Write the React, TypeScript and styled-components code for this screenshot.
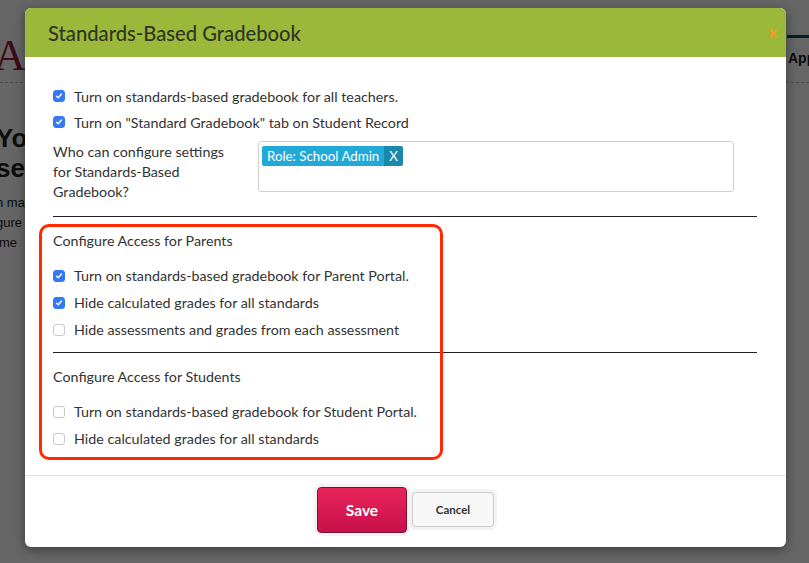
import React from "react";
import styled, { createGlobalStyle } from "styled-components";

const GlobalStyle = createGlobalStyle`
  html, body {
    margin: 0;
    padding: 0;
    width: 809px;
    height: 563px;
    overflow: hidden;
    font-family: "Lato", "Open Sans", sans-serif;
  }
`;

const Page = styled.div`
  position: relative;
  width: 809px;
  height: 563px;
  background: #ffffff;
  overflow: hidden;
`;

const PageHeader = styled.div`
  display: flex;
  align-items: flex-start;
  justify-content: space-between;
  height: 82px;
  border-bottom: 1px dashed #bbbbbb;
`;

const Logo = styled.div`
  font-family: "Liberation Serif", serif;
  font-size: 44px;
  color: #9b1c3d;
  margin: 34px 0 0 -6px;
  line-height: 1;
`;

const NavSide = styled.div`
  width: 21px;
  margin-top: 35px;
  border-top: 3px solid #0f4c5c;
  font-family: "Liberation Sans", sans-serif;
  font-weight: bold;
  font-size: 14px;
  color: #222;
  padding-top: 12px;
  padding-left: 1px;
  white-space: nowrap;
`;

const Intro = styled.div`
  padding: 40px 0 0 0;
  margin-left: -4px;
  font-family: "Liberation Sans", sans-serif;
  color: #222;
`;

const Big = styled.div`
  font-size: 26px;
  font-weight: bold;
  line-height: 30px;
`;

const Small = styled.div`
  font-size: 13px;
  line-height: 20px;
  margin-top: 10px;
`;

const Dim = styled.div`
  position: absolute;
  inset: 0;
  background: rgba(0, 0, 0, 0.6);
`;

const Modal = styled.div`
  position: absolute;
  left: 25px;
  top: 8px;
  width: 761px;
  height: 539px;
  background: #ffffff;
  border-radius: 6px;
  overflow: hidden;
  box-shadow: 0 3px 12px rgba(0, 0, 0, 0.4);
  display: flex;
  flex-direction: column;
  color: #333;
  font-family: "Lato", "Open Sans", sans-serif;
`;

const ModalHeader = styled.div`
  height: 49px;
  background: #9bb83a;
  display: flex;
  align-items: center;
  justify-content: space-between;
  padding: 0 9px 0 23px;
  flex-shrink: 0;
`;

const Title = styled.h2`
  margin: 0;
  font-size: 20.2px;
  font-weight: 500;
  color: #2f3524;
`;

const Close = styled.span`
  color: #f39a1c;
  font-size: 16px;
  font-weight: 900;
  margin-top: -3px;
`;

const Body = styled.div`
  position: relative;
  padding: 26px 29px 0 28px;
  flex: 1;
`;

const Row = styled.label<{ $h: number }>`
  display: flex;
  align-items: center;
  height: ${(p) => p.$h}px;
  font-size: 14.3px;
  color: #333;
  white-space: nowrap;
`;

const Box = styled.span<{ $on?: boolean }>`
  width: 12px;
  height: 12px;
  flex-shrink: 0;
  border-radius: 3px;
  box-sizing: border-box;
  margin-right: 9px;
  display: inline-flex;
  align-items: center;
  justify-content: center;
  background: ${(p) => (p.$on ? "#3478f6" : "#ffffff")};
  border: 1px solid ${(p) => (p.$on ? "#3478f6" : "#c8c8c8")};
`;

const ConfigRow = styled.div`
  display: flex;
  margin-top: 6px;
`;

const ConfigLabel = styled.div`
  width: 205px;
  font-size: 14.3px;
  line-height: 20px;
  margin-top: 1px;
`;

const TagInput = styled.div`
  width: 476px;
  height: 51px;
  box-sizing: border-box;
  border: 1px solid #cfcfcf;
  border-radius: 3px;
  padding: 3px;
`;

const Tag = styled.span`
  display: inline-flex;
  height: 20px;
  border-radius: 2px;
  overflow: hidden;
  font-size: 13.3px;
  color: #ffffff;
`;

const TagText = styled.span`
  background: #21a9d8;
  padding: 0 5px;
  line-height: 20px;
`;

const TagX = styled.span`
  background: #1888ad;
  padding: 0 5px;
  line-height: 20px;
`;

const Divider = styled.hr`
  border: none;
  border-top: 1px solid #222;
  margin: 0;
`;

const SectionTitle = styled.div`
  font-size: 14.3px;
  height: 20px;
  line-height: 20px;
`;

const Group = styled.div<{ $top: number }>`
  margin-top: ${(p) => p.$top}px;
`;

const Highlight = styled.div`
  position: absolute;
  left: 14px;
  top: 167px;
  width: 398px;
  height: 230px;
  border: 3px solid #ff2a00;
  border-radius: 10px;
  pointer-events: none;
`;

const Footer = styled.div`
  height: 72px;
  border-top: 1px solid #e2e2e2;
  display: flex;
  justify-content: center;
  align-items: flex-start;
  gap: 5px;
  padding-top: 11px;
  box-sizing: border-box;
  flex-shrink: 0;
`;

const SaveButton = styled.button`
  width: 90px;
  height: 46px;
  border-radius: 4px;
  border: 1px solid #7a1030;
  background: linear-gradient(#e8245c, #c8104a);
  color: #fff;
  font-family: "Lato", sans-serif;
  font-size: 15.5px;
  font-weight: bold;
  box-shadow: 0 0 0 3px #f3f3f3;
`;

const CancelButton = styled.button`
  width: 82px;
  height: 35px;
  margin-top: 5px;
  border-radius: 4px;
  border: 1px solid #cccccc;
  background: #f7f7f7;
  color: #333;
  font-family: "Lato", sans-serif;
  font-size: 11.5px;
  font-weight: bold;
  box-shadow: 0 0 0 3px #f3f3f3;
`;

const Check = () => (
  <svg width="8" height="8" viewBox="0 0 8 8">
    <path d="M1.5 4.2 L3.2 5.8 L6.5 2" fill="none" stroke="#fff" strokeWidth="1.4" strokeLinecap="round" strokeLinejoin="round" />
  </svg>
);

const Option = ({ on, h = 27, children }: { on?: boolean; h?: number; children: React.ReactNode }) => (
  <Row $h={h}>
    <Box $on={on}>{on && <Check />}</Box>
    {children}
  </Row>
);

export default function App() {
  return (
    <>
      <GlobalStyle />
      <Page>
        <PageHeader>
          <Logo>A</Logo>
          <NavSide>App</NavSide>
        </PageHeader>
        <Intro>
          <Big>You</Big>
          <Big>se</Big>
          <Small>
            n ma
            <br />
            gure
            <br />
            ime
          </Small>
        </Intro>
        <Dim />
        <Modal>
          <ModalHeader>
            <Title>Standards-Based Gradebook</Title>
            <Close>x</Close>
          </ModalHeader>
          <Body>
            <Option on h={26}>Turn on standards-based gradebook for all teachers.</Option>
            <Option on h={26}>Turn on "Standard Gradebook" tab on Student Record</Option>
            <ConfigRow>
              <ConfigLabel>
                Who can configure settings
                <br />
                for Standards-Based
                <br />
                Gradebook?
              </ConfigLabel>
              <TagInput>
                <Tag>
                  <TagText>Role: School Admin</TagText>
                  <TagX>X</TagX>
                </Tag>
              </TagInput>
            </ConfigRow>
            <Group $top={14}>
              <Divider />
            </Group>
            <Group $top={14}>
              <SectionTitle>Configure Access for Parents</SectionTitle>
            </Group>
            <Group $top={11}>
              <Option on>Turn on standards-based gradebook for Parent Portal.</Option>
              <Option on>Hide calculated grades for all standards</Option>
              <Option>Hide assessments and grades from each assessment</Option>
            </Group>
            <Group $top={9}>
              <Divider />
            </Group>
            <Group $top={14}>
              <SectionTitle>Configure Access for Students</SectionTitle>
            </Group>
            <Group $top={11}>
              <Option>Turn on standards-based gradebook for Student Portal.</Option>
              <Option>Hide calculated grades for all standards</Option>
            </Group>
            <Highlight />
          </Body>
          <Footer>
            <SaveButton>Save</SaveButton>
            <CancelButton>Cancel</CancelButton>
          </Footer>
        </Modal>
      </Page>
    </>
  );
}
